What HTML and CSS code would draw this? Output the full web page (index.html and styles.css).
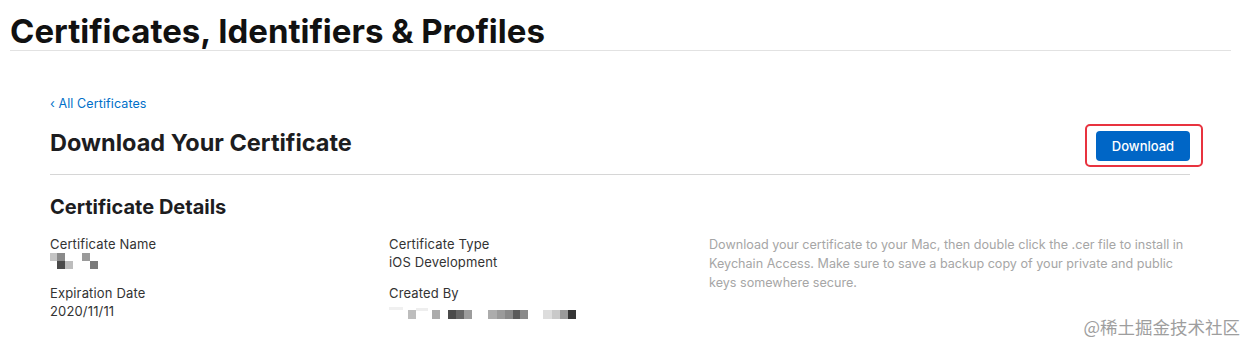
FILE: index.html
```html
<!DOCTYPE html>
<html lang="en">
<head>
<meta charset="utf-8">
<title>Certificates, Identifiers &amp; Profiles</title>
<link rel="stylesheet" href="styles.css">
</head>
<body>
<header class="top">
  <h1 class="top-title">Certificates, Identifiers &amp; Profiles</h1>
</header>
<main class="page">
  <a class="back" href="#">&#8249; All Certificates</a>
  <div class="head-row">
    <h2 class="head-title">Download Your Certificate</h2>
    <div class="btn-frame"><button class="btn">Download</button></div>
  </div>
  <h3 class="section-title">Certificate Details</h3>
  <div class="details">
    <div class="col">
      <div class="field">
        <div class="label">Certificate Name</div>
        <svg class="pix" width="60" height="18" viewBox="0 0 60 18">
          <rect x="0" y="0" width="7" height="8" fill="#c4c4c4"/>
          <rect x="7" y="0" width="8" height="8" fill="#8a8a8a"/>
          <rect x="7" y="8" width="8" height="8" fill="#4a4a4a"/>
          <rect x="15" y="8" width="8" height="8" fill="#bdbdbd"/>
          <rect x="32" y="0" width="8" height="8" fill="#9a9a9a"/>
          <rect x="40" y="8" width="8" height="8" fill="#7a7a7a"/>
        </svg>
      </div>
      <div class="field">
        <div class="label">Expiration Date</div>
        <div class="value">2020/11/11</div>
      </div>
    </div>
    <div class="col">
      <div class="field">
        <div class="label">Certificate Type</div>
        <div class="value">iOS Development</div>
      </div>
      <div class="field">
        <div class="label">Created By</div>
        <svg class="pix" width="200" height="18" viewBox="0 0 200 18">
          <rect x="0" y="5" width="14" height="3" fill="#f0f0f0"/>
          <rect x="19" y="8" width="8" height="9" fill="#bdbdbd"/>
          <rect x="27" y="6" width="12" height="3" fill="#eeeeee"/>
          <rect x="43" y="8" width="8" height="9" fill="#ababab"/>
          <rect x="59" y="8" width="8" height="9" fill="#4a4a4a"/>
          <rect x="67" y="8" width="8" height="9" fill="#666666"/>
          <rect x="75" y="8" width="8" height="9" fill="#9c9c9c"/>
          <rect x="99" y="8" width="9" height="9" fill="#acacac"/>
          <rect x="108" y="8" width="8" height="9" fill="#9a9a9a"/>
          <rect x="116" y="8" width="8" height="9" fill="#888888"/>
          <rect x="124" y="8" width="7" height="9" fill="#5a5a5a"/>
          <rect x="131" y="8" width="8" height="9" fill="#8a8a8a"/>
          <rect x="154" y="8" width="9" height="9" fill="#dddddd"/>
          <rect x="163" y="8" width="8" height="9" fill="#c9c9c9"/>
          <rect x="171" y="8" width="8" height="9" fill="#9a9a9a"/>
          <rect x="179" y="8" width="8" height="9" fill="#353535"/>
        </svg>
      </div>
    </div>
    <p class="note">Download your certificate to your Mac, then double click the .cer file to install in Keychain Access. Make sure to save a backup copy of your private and public keys somewhere secure.</p>
  </div>
</main>
<div class="watermark">@稀土掘金技术社区</div>
</body>
</html>
```

FILE: styles.css
```css
html, body {
  margin: 0;
  padding: 0;
  background: #ffffff;
}
body {
  font-family: Inter, "Noto Sans", "Liberation Sans", sans-serif;
  color: #1d1d1f;
  width: 1249px;
  height: 346px;
  overflow: hidden;
  position: relative;
}
.top {
  margin: 0 18px 0 10px;
  border-bottom: 1px solid #e2e2e2;
  height: 50px;
}
.top-title {
  margin: 0;
  padding-top: 11px;
  font-size: 33px;
  line-height: 40px;
  font-weight: 700;
  letter-spacing: 0;
  color: #111;
}
.page {
  margin: 0 59px 0 50px;
  padding-top: 45px;
}
.back {
  display: block;
  font-size: 12.5px;
  line-height: 16px;
  letter-spacing: 0.1px;
  color: #0070c9;
  text-decoration: none;
}
.head-row {
  display: flex;
  align-items: center;
  justify-content: space-between;
  border-bottom: 1px solid #d6d6d6;
  height: 62px;
}
.head-title {
  margin: 0 0 1px;
  font-size: 23.5px;
  font-weight: 700;
  color: #1d1d1f;
}
.btn-frame {
  border: 2px solid #e8333f;
  border-radius: 5px;
  padding: 5px 11px 4px 9px;
  margin-right: -13px;
  margin-top: 4px;
}
.btn {
  display: block;
  width: 94px;
  height: 30px;
  border: 0;
  border-radius: 4px;
  background: #0066c6;
  color: #fff;
  font-family: inherit;
  font-size: 13px;
  font-weight: 500;
}
.section-title {
  margin: 20px 0 0;
  font-size: 20px;
  line-height: 24px;
  font-weight: 700;
}
.details {
  display: grid;
  grid-template-columns: 339px 320px 1fr;
  margin-top: 16px;
}
.field {
  display: flex;
  flex-direction: column;
  height: 49px;
}
.label, .value {
  font-size: 13px;
  line-height: 18px;
  letter-spacing: 0.15px;
  color: #333;
}
.pix {
  display: block;
}
.note {
  margin: 0;
  padding-top: 0;
  font-size: 12.6px;
  line-height: 19px;
  color: #a6a6a6;
  max-width: 482px;
}
.watermark {
  position: absolute;
  right: 9px;
  bottom: 7px;
  font-family: "Noto Sans CJK SC", sans-serif;
  font-size: 17.5px;
  color: #9e9e9e;
}
```
